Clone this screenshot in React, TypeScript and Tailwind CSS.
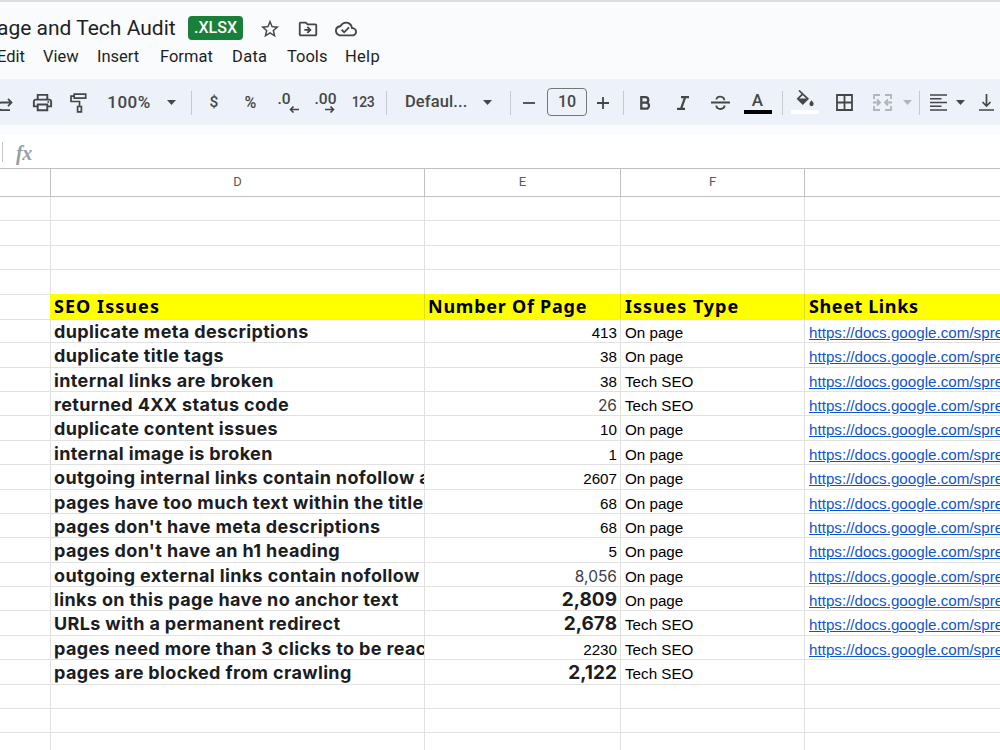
import type { ReactNode } from 'react';
import { MdOutlineCloudDone, MdOutlineDriveFileMove, MdOutlinePrint, MdStarBorder } from 'react-icons/md';
import clsx from 'clsx';

const menus = [
  { label: 'Edit', className: 'w-[27px] ml-[-3px]' },
  { label: 'View', className: 'w-[36px] ml-[19px]' },
  { label: 'Insert', className: 'w-[44px] ml-[18px]' },
  { label: 'Format', className: 'w-[54px] ml-[19px]' },
  { label: 'Data', className: 'w-[36px] ml-[18px] tracking-[0.3px]' },
  { label: 'Tools', className: 'w-[40px] ml-[19px]' },
  { label: 'Help', className: 'w-[36px] ml-[18px] tracking-[0.3px]' },
];

type Issue = { issue: string; count: string; type: string; link?: boolean; style?: 'large' | 'soft' };

const issues: Issue[] = [
  { issue: 'duplicate meta descriptions', count: '413', type: 'On page' },
  { issue: 'duplicate title tags', count: '38', type: 'On page' },
  { issue: 'internal links are broken', count: '38', type: 'Tech SEO' },
  { issue: 'returned 4XX status code', count: '26', type: 'Tech SEO', style: 'soft' },
  { issue: 'duplicate content issues', count: '10', type: 'On page' },
  { issue: 'internal image is broken', count: '1', type: 'On page' },
  { issue: 'outgoing internal links contain nofollow a', count: '2607', type: 'On page' },
  { issue: 'pages have too much text within the title', count: '68', type: 'On page' },
  { issue: "pages don't have meta descriptions", count: '68', type: 'On page' },
  { issue: "pages don't have an h1 heading", count: '5', type: 'On page' },
  { issue: 'outgoing external links contain nofollow a', count: '8,056', type: 'On page', style: 'soft' },
  { issue: 'links on this page have no anchor text', count: '2,809', type: 'On page', style: 'large' },
  { issue: 'URLs with a permanent redirect', count: '2,678', type: 'Tech SEO', style: 'large' },
  { issue: 'pages need more than 3 clicks to be reac', count: '2230', type: 'Tech SEO' },
  { issue: 'pages are blocked from crawling', count: '2,122', type: 'Tech SEO', link: false, style: 'large' },
];

function Tool({ className, children }: { className: string; children: ReactNode }) {
  return <button className={clsx('flex h-full shrink-0 items-center justify-center', className)}>{children}</button>;
}

function Separator({ className }: { className?: string }) {
  return <div className={clsx('h-6 w-px shrink-0 bg-[#c5c9d1]', className)} />;
}

function Caret({ className }: { className?: string }) {
  return (
    <svg className={clsx('h-[5px] w-[9px] shrink-0', className)} viewBox="0 0 9 5" fill="currentColor">
      <path d="M0 0h9L4.5 5z" />
    </svg>
  );
}

function Toolbar() {
  return (
    <div className="flex h-[46px] items-center bg-[#edf1fa] pt-px font-['Roboto',sans-serif] text-[#444746]">
      <Tool className="w-[18px] justify-start!">
        <svg className="mt-1 h-4 w-[14px] shrink-0" viewBox="0 0 14 16" fill="none" stroke="currentColor" strokeWidth="1.8">
          <path d="M11 5.500H2C-.500 5.500-2 7-2 9.300s1.500 3.900 4 3.900h8M8 1.800l3.500 3.700L8 9.200" />
        </svg>
      </Tool>
      <Tool className="w-[48px]">
        <MdOutlinePrint className="size-[23px]" />
      </Tool>
      <Tool className="w-[26px]">
        <svg className="h-[22px] w-[20px]" viewBox="0 0 20 22" fill="none" stroke="currentColor" strokeWidth="1.7">
          <path d="M5.200 2.200h11.500v4H5.200zM5.200 4.200H2v5.300h8.500v5M8.600 14.500h3.800v5.300H8.600z" />
        </svg>
      </Tool>
      <Tool className="w-[74px] pt-px text-[17px] font-medium tracking-[0.5px]">100%</Tool>
      <Caret className="ml-px" />
      <Separator className="ml-[15px]" />
      <Tool className="w-[44px] text-[15.500px] font-medium">$</Tool>
      <Tool className="w-[29px] text-[16px] font-medium">%</Tool>
      <Tool className="w-[46px]">
        <div className="flex flex-col items-start text-[15.500px] leading-[14px] font-medium">
          .0
          <svg className="ml-[11px] h-[7px] w-[10px]" viewBox="0 0 10 7" fill="none" stroke="currentColor" strokeWidth="1.6">
            <path d="M10 3.500H1.500M4.500.5l-3 3 3 3" />
          </svg>
        </div>
      </Tool>
      <Tool className="w-[29px]">
        <div className="flex flex-col items-start text-[15.500px] leading-[14px] font-medium">
          .00
          <svg className="ml-[10px] h-[7px] w-[10px]" viewBox="0 0 10 7" fill="none" stroke="currentColor" strokeWidth="1.6">
            <path d="M0 3.500h8.500M5.500.5l3 3-3 3" />
          </svg>
        </div>
      </Tool>
      <Tool className="w-[46px] text-[14px] font-medium tracking-[-0.4px]">123</Tool>
      <Separator />
      <Tool className="w-[96px] justify-start! pl-[18px] text-[16.5px] font-medium tracking-[0.1px]">Defaul...</Tool>
      <Caret />
      <Separator className="ml-[18px]" />
      <Tool className="w-[36px]">
        <svg className="h-[12px] w-[12px]" viewBox="0 0 12 12" stroke="currentColor" strokeWidth="1.8">
          <path d="M0 6h12" />
        </svg>
      </Tool>
      <div className="mb-px flex h-[28px] w-[40px] shrink-0 items-center justify-center rounded-[4px] border border-[#747775] text-[16px] font-medium">
        10
      </div>
      <Tool className="w-[32px]">
        <svg className="h-[12px] w-[12px]" viewBox="0 0 12 12" stroke="currentColor" strokeWidth="1.8">
          <path d="M0 6h12M6 0v12" />
        </svg>
      </Tool>
      <Separator className="ml-[4px]" />
      <Tool className="w-[42px]">
        <svg className="h-[14px] w-[12px]" viewBox="0 0 12 14" fill="none" stroke="currentColor" strokeWidth="2.300">
          <path d="M2.300 1.200H6.500a2.700 2.700 0 0 1 0 5.500H2.300zM2.300 6.700H7a3 3 0 0 1 0 6H2.300z" />
        </svg>
      </Tool>
      <Tool className="w-[33px]">
        <svg className="h-[14px] w-[12px]" viewBox="0 0 12 14" fill="none" stroke="currentColor" strokeWidth="2.200">
          <path d="M4 1.200h8M0 12.800h8M8.200 1.200 4 12.800" />
        </svg>
      </Tool>
      <Tool className="w-[42px]">
        <svg className="h-[16px] w-[19px]" viewBox="0 0 19 16" fill="none" stroke="currentColor" strokeWidth="1.900">
          <path d="M0 7.500h19M13.300 5.200C13 .700 5.500.500 5.500 4.500M5.300 10.500C5.800 15.300 13.700 15 13.500 10.500" />
        </svg>
      </Tool>
      <Tool className="w-[33px] flex-col">
        <span className="mt-[2px] text-[17px] leading-[15px] font-medium">A</span>
        <span className="mt-[2px] h-[4px] w-[28px] bg-black" />
      </Tool>
      <Separator className="ml-[8px]" />
      <Tool className="w-[44px] flex-col">
        <svg className="mt-[-2px] h-[17px] w-[18px]" viewBox="0 0 18 17" fill="none" stroke="currentColor" strokeWidth="1.700">
          <path d="M3 .500l8.800 8.300-5 5-5-5 5.500-5.400" />
          <path d="M2 8.500h10l-5.200 5.300z" fill="currentColor" stroke="none" />
          <path d="M15.500 10.300s2.200 2.300 2.200 3.700a2.100 2.100 0 0 1-4.300 0c0-1.400 2.100-3.700 2.100-3.700z" fill="currentColor" stroke="none" />
        </svg>
        <span className="mt-[3px] h-[4px] w-[28px] bg-white" />
      </Tool>
      <Tool className="w-[34px]">
        <svg className="h-[17px] w-[17px]" viewBox="0 0 17 17" fill="none" stroke="currentColor" strokeWidth="1.800">
          <path d="M1 1h15v15H1zM8.500 1v15M1 8.500h15" />
        </svg>
      </Tool>
      <Tool className="w-[42px] text-[#b1b4b9]">
        <svg className="h-[17px] w-[19px]" viewBox="0 0 19 17" fill="none" stroke="currentColor" strokeWidth="1.800">
          <path d="M7 1H1v4M12 1h6v4M7 16H1v-4M12 16h6v-4M0 8.500h6.500M4 5.500l3 3-3 3M19 8.500h-6.500M15 5.500l-3 3 3 3" />
        </svg>
      </Tool>
      <Caret className="text-[#b1b4b9]" />
      <Separator className="ml-[7px]" />
      <Tool className="w-[36px]">
        <svg className="h-[17px] w-[17px]" viewBox="0 0 17 17" stroke="currentColor" strokeWidth="1.700">
          <path d="M0 1h17M0 4.750h11.500M0 8.500h17M0 12.250h11.500M0 16h17" />
        </svg>
      </Tool>
      <Caret />
      <Tool className="w-[43px]">
        <svg className="h-[17px] w-[15px]" viewBox="0 0 15 17" fill="none" stroke="currentColor" strokeWidth="1.700">
          <path d="M0 16h15M7.500 0v12M3.500 8l4 4 4-4" />
        </svg>
      </Tool>
    </div>
  );
}

const rowClass = 'grid h-[24.375px] grid-cols-[51px_374px_196px_184px_196px]';
const cellClass = 'min-w-0 overflow-hidden whitespace-nowrap border-r border-b border-[#e1e1e1]';
const smallClass = "font-['Liberation_Sans',Arial,sans-serif] text-[15.200px] leading-[28px] text-black";
const interClass = "font-['Inter',sans-serif] [font-optical-sizing:none] text-[#1b1d22]";

function EmptyRow() {
  return (
    <div className={rowClass}>
      {[0, 1, 2, 3, 4].map((i) => (
        <div key={i} className={cellClass} />
      ))}
    </div>
  );
}

function HeadingCell({ children, className }: { children: string; className?: string }) {
  return (
    <div
      className={clsx(
        "-mt-px border-r border-b border-r-[#dddd10] border-b-[#e8e890] bg-[#ffff00] pl-[4px] font-['Noto_Sans',sans-serif] text-[18px] leading-[25px] font-bold whitespace-nowrap text-black",
        className,
      )}
    >
      {children}
    </div>
  );
}

export default function App() {
  return (
    <div className="h-[750px] w-[1000px] overflow-hidden bg-white">
      <header className="h-[79px] border-t-2 border-[#dcdde0] bg-[#f9fbfd]">
        <div className="flex h-[53px] items-center">
          <span className="ml-[-3px] w-[178px] shrink-0 font-['Roboto',sans-serif] text-[21px] whitespace-nowrap text-[#1f1f1f]">
            age and Tech Audit
          </span>
          <span className="mb-px ml-[13px] flex h-[24px] w-[55px] items-center justify-center rounded-[4px] bg-[#188038] font-['Roboto',sans-serif] text-[16px] font-medium text-white">
            .XLSX
          </span>
          <MdStarBorder className="ml-[16px] size-[22px] text-[#444746]" />
          <MdOutlineDriveFileMove className="ml-[16px] size-[22px] text-[#444746]" />
          <MdOutlineCloudDone className="ml-[16px] size-[22px] text-[#444746]" />
        </div>
        <nav className="flex h-[4px] items-center font-['Roboto',sans-serif] text-[16.500px] text-[#1f1f1f]">
          {menus.map((m) => (
            <span key={m.label} className={clsx('shrink-0 whitespace-nowrap', m.className)}>
              {m.label}
            </span>
          ))}
        </nav>
      </header>

      <Toolbar />

      <div className="h-[10px] bg-[#f9fbfd]" />
      <div className="flex h-[33px] items-center">
        <div className="ml-[2px] h-[20px] w-px bg-[#c7c7c7]" />
        <span className="mt-[2px] ml-[13px] font-['Liberation_Serif',serif] text-[20px] font-bold tracking-[-0.5px] text-[#9a9da1] italic">
          fx
        </span>
      </div>

      <div className="grid h-[29px] grid-cols-[51px_374px_196px_184px_196px] border-y border-[#c0c0c0] font-['Roboto',sans-serif] text-[13px] leading-[26px] text-[#575b5f]">
        {['', 'D', 'E', 'F', ''].map((c, i) => (
          <div key={i} className="border-r border-[#c0c0c0] text-center">
            {c}
          </div>
        ))}
      </div>

      <EmptyRow />
      <EmptyRow />
      <EmptyRow />
      <EmptyRow />

      <div className={rowClass}>
        <div className={cellClass} />
        <HeadingCell className="-ml-px tracking-[1.05px]">SEO Issues</HeadingCell>
        <HeadingCell className="pl-[3px]! tracking-[0.75px]">Number Of Page</HeadingCell>
        <HeadingCell className="tracking-[0.95px]">Issues Type</HeadingCell>
        <HeadingCell className="tracking-[0.6px]">Sheet Links</HeadingCell>
      </div>

      {issues.map((row) => (
        <div key={row.issue} className={rowClass}>
          <div className={cellClass} />
          <div className={clsx(cellClass, interClass, 'pl-[3px] text-[18px] leading-[25px] font-bold tracking-[0.36px]')}>
            {row.issue}
          </div>
          {row.style === 'large' ? (
            <div className={clsx(cellClass, interClass, 'pr-[3px] text-right text-[19px] leading-[25px] font-bold')}>
              {row.count}
            </div>
          ) : row.style === 'soft' ? (
            <div className={clsx(cellClass, interClass, 'pr-[3px] text-right text-[15.500px] leading-[28px] text-[#3c4043]!')}>
              {row.count}
            </div>
          ) : (
            <div className={clsx(cellClass, smallClass, 'pr-[3px] text-right')}>{row.count}</div>
          )}
          <div className={clsx(cellClass, smallClass, 'pl-[4px]')}>{row.type}</div>
          <div className={clsx(cellClass, smallClass, 'pl-[4px]')}>
            {row.link !== false && (
              <a className="text-[#1155cc] underline" href="#">
                https://docs.google.com/spre
              </a>
            )}
          </div>
        </div>
      ))}

      <EmptyRow />
      <EmptyRow />
      <EmptyRow />
    </div>
  );
}
